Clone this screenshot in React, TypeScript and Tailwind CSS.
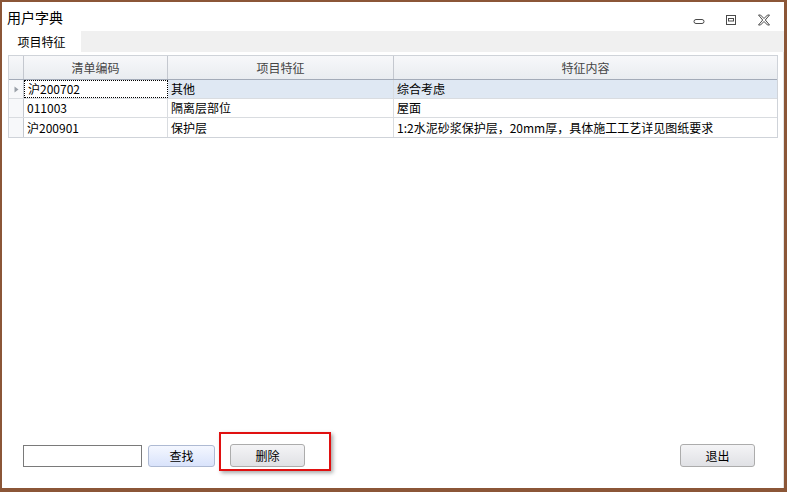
import React from "react";

const rows = [
  { code: "沪200702", feat: "其他", content: "综合考虑" },
  { code: "011003", feat: "隔离层部位", content: "屋面" },
  { code: "沪200901", feat: "保护层", content: "1:2水泥砂浆保护层，20mm厚，具体施工工艺详见图纸要求" },
];

const font = { fontFamily: '"Noto Sans CJK SC", "Noto Sans", sans-serif' };

export default function App() {
  return (
    <div
      className="w-[787px] h-[492px] bg-white border-l-2 border-t-2 border-r-[3px] border-b-4 border-[#8b5637] flex flex-col text-black overflow-hidden"
      style={font}
    >
      {/* title bar */}
      <div className="h-[29px] flex items-center justify-between shrink-0">
        <div className="pl-[5px] text-[14px] leading-none">用户字典</div>
        <div className="flex items-center h-full pr-[14px] pt-[6px]">
          <svg width="12" height="12" viewBox="0 0 12 12" className="mr-[20px]">
            <rect x="1" y="5.5" width="10" height="4" rx="2" fill="none" stroke="#4a4a4a" strokeWidth="1" />
          </svg>
          <svg width="12" height="12" viewBox="0 0 12 12" className="mr-[21px]">
            <rect x="1.5" y="1.5" width="9" height="9" fill="none" stroke="#4a4a4a" strokeWidth="1" />
            <rect x="3.5" y="4.5" width="5" height="2.5" fill="none" stroke="#4a4a4a" strokeWidth="1" />
          </svg>
          <svg width="12" height="12" viewBox="0 0 12 12">
            <path
              d="M0.5 1 L2.5 1 L6 4.5 L9.5 1 L11.5 1 L7.3 6 L11.5 11 L9.5 11 L6 7.5 L2.5 11 L0.5 11 L4.7 6 Z"
              fill="none"
              stroke="#4a4a4a"
              strokeWidth="1"
              strokeLinejoin="round"
            />
          </svg>
        </div>
      </div>

      {/* tab strip */}
      <div className="h-[21px] bg-[#f0f0f0] flex shrink-0">
        <div className="w-[79px] bg-white flex items-center justify-center text-[12px] leading-none">
          项目特征
        </div>
      </div>

      {/* content */}
      <div className="flex-1 flex flex-col bg-white border-r border-[#e3e3e3]">
        <div className="ml-[6px] mt-[3px] w-[770px] border border-[#cfd3d9] text-[12px] leading-none">
          {/* header */}
          <div className="grid grid-cols-[15px_144px_226px_1fr] h-[24px] bg-gradient-to-b from-[#f7f8fa] to-[#e9ecf0] border-b border-[#a3abb8] text-[#454545]">
            <div className="border-r border-[#c4c8cf]" />
            <div className="border-r border-[#c4c8cf] flex items-center justify-center">清单编码</div>
            <div className="border-r border-[#c4c8cf] flex items-center justify-center">项目特征</div>
            <div className="flex items-center justify-center">特征内容</div>
          </div>
          {rows.map((r, i) => (
            <div
              key={i}
              className={`grid grid-cols-[15px_144px_226px_1fr] h-[19px] ${i < rows.length - 1 ? "border-b border-[#d9dce0]" : ""}`}
            >
              <div className="border-r border-[#c4c8cf] bg-[#f7f8fa] flex items-center justify-center">
                {i === 0 && (
                  <svg width="5" height="7" viewBox="0 0 5 7">
                    <path d="M0.5 0.5 L4.5 3.5 L0.5 6.5 Z" fill="#9aa0a8" />
                  </svg>
                )}
              </div>
              <div
                className={`border-r border-[#d9dce0] flex items-center pl-[3px] ${i === 0 ? "border border-dotted border-black bg-white" : ""}`}
              >
                {r.code}
              </div>
              <div className={`border-r border-[#d9dce0] flex items-center pl-[3px] ${i === 0 ? "bg-[#dfe8f3]" : ""}`}>
                {r.feat}
              </div>
              <div className={`flex items-center pl-[3px] ${i === 0 ? "bg-[#dfe8f3]" : ""}`}>{r.content}</div>
            </div>
          ))}
        </div>

        <div className="flex-1" />

        {/* bottom controls */}
        <div className="flex items-center pl-[21px] pr-[28px] pb-[21px] text-[12px] leading-none">
          <div className="w-[119px] h-[22px] border border-[#7a7a7a] bg-white" />
          <button className="ml-[6px] w-[67px] h-[22px] rounded-[3px] border border-[#aebad3] bg-gradient-to-b from-[#f4f7ff] to-[#d9e3fb] flex items-center justify-center">
            查找
          </button>
          <div className="relative ml-[15px]">
            <button className="w-[75px] h-[23px] rounded-[3px] border border-[#acacac] bg-gradient-to-b from-[#f4f4f6] to-[#e0e1e5] flex items-center justify-center">
              删除
            </button>
            <div className="absolute left-[-11px] top-[-12px] w-[112px] h-[39px] border-2 border-[#e01010] shadow-[2px_2px_4px_rgba(0,0,0,0.35)] pointer-events-none" />
          </div>
          <div className="flex-1" />
          <button className="w-[75px] h-[23px] rounded-[3px] border border-[#acacac] bg-gradient-to-b from-[#f4f4f6] to-[#e0e1e5] flex items-center justify-center">
            退出
          </button>
        </div>
      </div>
    </div>
  );
}
